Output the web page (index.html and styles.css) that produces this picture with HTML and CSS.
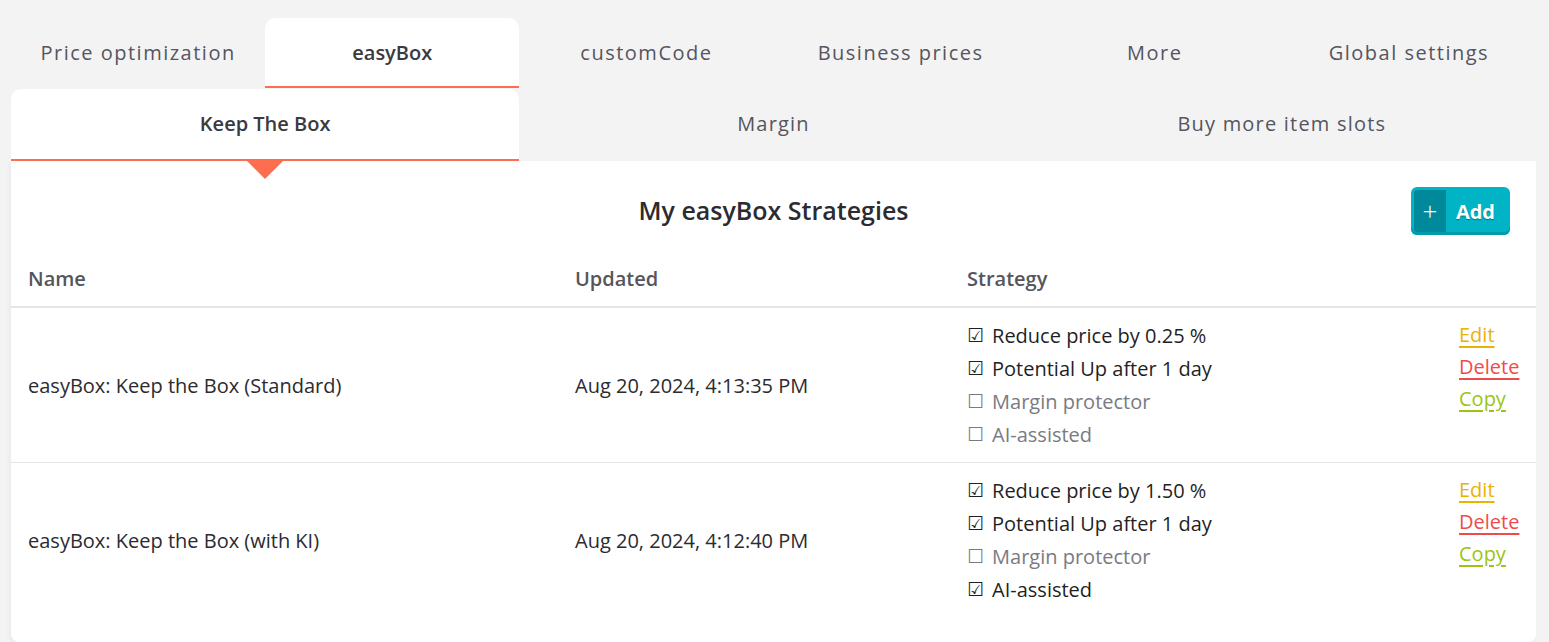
FILE: index.html
```html
<!DOCTYPE html>
<html lang="en">
<head>
  <meta charset="UTF-8">
  <meta name="viewport" content="width=device-width, initial-scale=1.0">
  <title>easyBox Strategies</title>
  <link rel="stylesheet" href="styles.css">
</head>
<body>
  <div class="page">
    <nav class="main-tabs">
      <a class="tab">Price optimization</a>
      <a class="tab active">easyBox</a>
      <a class="tab">customCode</a>
      <a class="tab">Business prices</a>
      <a class="tab">More</a>
      <a class="tab">Global settings</a>
    </nav>

    <nav class="sub-tabs">
      <a class="subtab active">Keep The Box</a>
      <a class="subtab">Margin</a>
      <a class="subtab">Buy more item slots</a>
    </nav>

    <section class="card">
      <div class="card-head">
        <h2>My easyBox Strategies</h2>
        <button class="btn-add"><span class="btn-icon">+</span><span class="btn-label">Add</span></button>
      </div>

      <table class="strategies">
        <colgroup>
          <col class="col-name">
          <col class="col-updated">
          <col class="col-strategy">
          <col>
        </colgroup>
        <thead>
          <tr>
            <th>Name</th>
            <th>Updated</th>
            <th>Strategy</th>
            <th></th>
          </tr>
        </thead>
        <tbody>
          <tr>
            <td>easyBox: Keep the Box (Standard)</td>
            <td>Aug 20, 2024, 4:13:35 PM</td>
            <td>
              <ul class="options">
                <li class="on"><span class="box">☑</span>Reduce price by 0.25 %</li>
                <li class="on"><span class="box">☑</span>Potential Up after 1 day</li>
                <li><span class="box">☐</span>Margin protector</li>
                <li><span class="box">☐</span>AI-assisted</li>
              </ul>
            </td>
            <td class="actions">
              <a class="edit">Edit</a>
              <a class="delete">Delete</a>
              <a class="copy">Copy</a>
            </td>
          </tr>
          <tr>
            <td>easyBox: Keep the Box (with KI)</td>
            <td>Aug 20, 2024, 4:12:40 PM</td>
            <td>
              <ul class="options">
                <li class="on"><span class="box">☑</span>Reduce price by 1.50 %</li>
                <li class="on"><span class="box">☑</span>Potential Up after 1 day</li>
                <li><span class="box">☐</span>Margin protector</li>
                <li class="on"><span class="box">☑</span>AI-assisted</li>
              </ul>
            </td>
            <td class="actions">
              <a class="edit">Edit</a>
              <a class="delete">Delete</a>
              <a class="copy">Copy</a>
            </td>
          </tr>
        </tbody>
      </table>
    </section>
  </div>
</body>
</html>
```

FILE: styles.css
```css
body {
  margin: 0;
  background-color: #f3f3f3;
  font-family: "Open Sans", "Noto Sans", Arial, sans-serif;
  color: #2b2b30;
}

.page {
  width: 1525px;
  padding: 18px 0 0 11px;
}

/* main tabs */
.main-tabs {
  display: grid;
  grid-template-columns: repeat(6, 1fr);
}

.tab {
  height: 70px;
  padding-bottom: 2px;
  box-sizing: border-box;
  display: flex;
  justify-content: center;
  align-items: center;
  font-size: 20px;
  letter-spacing: 1.5px;
  color: #55555e;
  cursor: pointer;
}

.tab.active {
  background-color: #fff;
  border-radius: 10px 10px 0 0;
  border-bottom: 2px solid #fd6e50;
  padding-bottom: 0;
  font-weight: 600;
  letter-spacing: 0;
  color: #3a3a40;
}

/* sub tabs */
.sub-tabs {
  display: grid;
  grid-template-columns: repeat(3, 1fr);
  margin-top: 1px;
}

.subtab {
  position: relative;
  height: 72px;
  padding-bottom: 4px;
  box-sizing: border-box;
  display: flex;
  justify-content: center;
  align-items: center;
  font-size: 20px;
  letter-spacing: 1.2px;
  color: #55555e;
  cursor: pointer;
}

.subtab.active {
  background-color: #fff;
  border-radius: 10px 10px 0 0;
  border-bottom: 2px solid #fd6e50;
  padding-bottom: 2px;
  font-weight: 600;
  letter-spacing: 0;
  color: #3a3a40;
}

.subtab.active::after {
  content: "";
  position: absolute;
  left: 50%;
  bottom: -20px;
  margin-left: -18px;
  border-left: 18px solid transparent;
  border-right: 18px solid transparent;
  border-top: 18px solid #fd6e50;
}

/* card */
.card {
  background-color: #fff;
  border-radius: 0 0 8px 8px;
  box-shadow: -2px 2px 4px rgba(0, 0, 0, 0.04);
  padding-bottom: 25px;
}

.card-head {
  display: grid;
  grid-template-columns: 1fr auto 1fr;
  align-items: center;
  padding: 26px 26px 15px 26px;
}

.card-head h2 {
  grid-column: 2;
  margin: 0 0 2px 0;
  font-size: 25px;
  font-weight: 600;
  color: #2b2b30;
}

.btn-add {
  justify-self: end;
  display: flex;
  align-items: stretch;
  height: 48px;
  padding: 3px;
  border: none;
  border-radius: 6px;
  background-color: #00b4c6;
  box-shadow: inset 0 -3px 0 #009cac;
  color: #fff;
  font-family: inherit;
  cursor: pointer;
}

.btn-icon {
  width: 32px;
  display: flex;
  justify-content: center;
  align-items: center;
  background-color: #00899a;
  border-radius: 3px 0 0 3px;
  font-size: 26px;
  font-weight: 300;
}

.btn-label {
  display: flex;
  align-items: center;
  padding: 0 12px 0 10px;
  font-size: 20px;
  font-weight: 700;
  text-shadow: 0 1px 1px rgba(0, 0, 0, 0.35);
}

/* table */
.strategies {
  width: 100%;
  border-collapse: collapse;
  table-layout: fixed;
}

.col-name { width: 547px; }
.col-updated { width: 392px; }
.col-strategy { width: 492px; }

.strategies th {
  text-align: left;
  padding: 17px 17px 15px 17px;
  line-height: 24px;
  font-size: 20px;
  font-weight: 600;
  color: #55555e;
  border-bottom: 2px solid #e5e5e5;
}

.strategies td {
  padding: 11px 17px 11px 17px;
  font-size: 20px;
  vertical-align: middle;
  border-bottom: 1px solid #e5e5e5;
}

.strategies tbody tr:last-child td {
  border-bottom: none;
}

.options {
  list-style: none;
  margin: 0;
  padding: 0;
}

.options li {
  display: flex;
  align-items: center;
  height: 33px;
  color: #7a7a82;
}

.options li.on {
  color: #1f1f24;
}

.box {
  font-family: "DejaVu Sans", sans-serif;
  font-size: 19px;
  line-height: 1;
  margin-right: 8px;
}

.actions {
  vertical-align: top !important;
}

.actions a {
  display: block;
  width: max-content;
  line-height: 32px;
  text-decoration: underline;
  text-underline-offset: 4px;
  cursor: pointer;
}

.actions .edit { color: #e9b300; }
.actions .delete { color: #f04b4b; }
.actions .copy { color: #9cc414; }
```
